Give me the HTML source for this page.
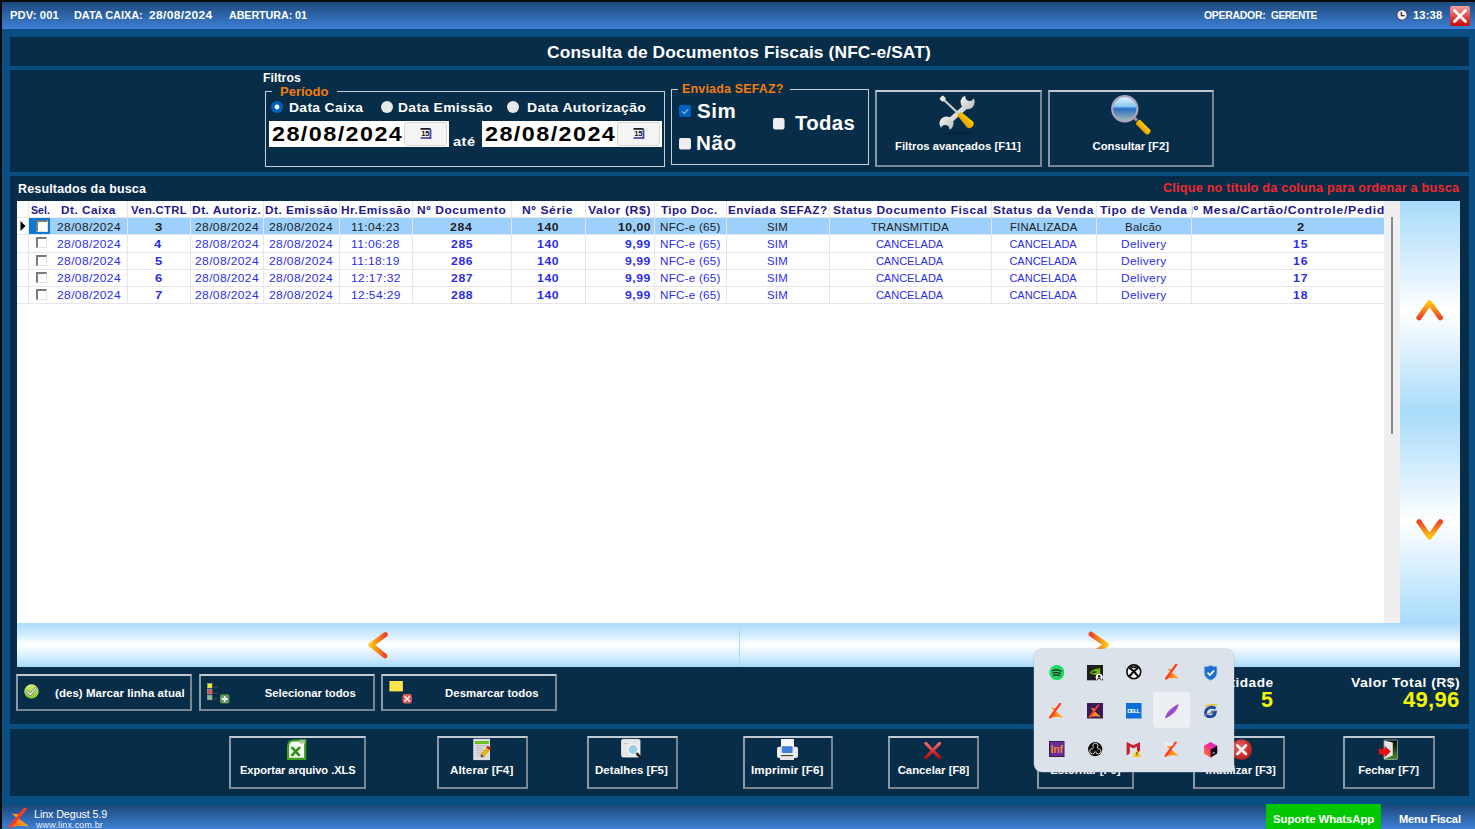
<!DOCTYPE html>
<html><head><meta charset="utf-8"><title>Consulta de Documentos Fiscais</title>
<style>
*{margin:0;padding:0;box-sizing:border-box}
html,body{width:1475px;height:829px;overflow:hidden;background:#0c0b09;font-family:"Liberation Sans",sans-serif}
#root{position:absolute;left:0;top:0;width:1475px;height:829px}
.a{position:absolute}
.t{position:absolute;white-space:pre;font-family:"Liberation Sans",sans-serif}
.band{position:absolute;left:2px;top:2px;width:1473px;height:827px;background:#0a4f84}
.bar{position:absolute;left:2px;width:1473px;background:linear-gradient(#1c497b,#3e80d6)}
.pnl{position:absolute;left:10px;width:1459px;background:#082d48}
.gb{position:absolute;border:1px solid #c9cfd6}
.btn{position:absolute;border:2px solid;border-color:#c2cad2 #7c8690 #7c8690 #8c9aa8}
.grid{position:absolute;left:17px;top:201px;width:1367px;height:422px;background:#fff;overflow:hidden}
.hs{position:absolute;left:17px;top:623px;width:1443px;height:44px;background:linear-gradient(#a8dbfa 0%,#def1fe 34%,#ffffff 48%,#f6fbff 56%,#d6eefd 76%,#a8dbfa 100%)}
.vs{position:absolute;left:1400px;width:60px;height:211px;background:linear-gradient(#a8dbfa 0%,#e2f3fe 36%,#ffffff 52%,#e2f3fe 68%,#a8dbfa 100%)}
</style></head><body><div id="root">
<div class="band"></div>
<div class="bar" style="top:2px;height:27px"></div>
<div class="pnl" style="top:37px;height:29px"></div>
<div class="pnl" style="top:70px;height:102px"></div>
<div class="pnl" style="top:176px;height:548px"></div>
<div class="pnl" style="top:729px;height:67px"></div>
<div class="bar" style="top:805px;height:24px"></div>
<!-- filter group boxes -->
<div class="gb" style="left:265px;top:91px;width:400px;height:76px"></div>
<div class="a" style="left:272px;top:85px;width:65px;height:10px;background:#082d48"></div>
<div class="gb" style="left:671px;top:89px;width:198px;height:76px"></div>
<div class="a" style="left:678px;top:83px;width:112px;height:10px;background:#082d48"></div>
<!-- date boxes -->
<div class="a" style="left:269px;top:121px;width:180px;height:26px;background:#fff"></div>
<div class="a" style="left:404px;top:122px;width:43px;height:24px;background:#f4f4f4;border:1px solid #d6d6d6;border-radius:3px"></div>
<div class="a" style="left:482px;top:121px;width:180px;height:26px;background:#fff"></div>
<div class="a" style="left:617px;top:122px;width:43px;height:24px;background:#f4f4f4;border:1px solid #d6d6d6;border-radius:3px"></div>
<!-- filter buttons -->
<div class="btn" style="left:875px;top:90px;width:167px;height:77px"></div>
<div class="btn" style="left:1048px;top:90px;width:166px;height:77px"></div>
<!-- grid -->
<div class="grid"></div>
<div class="a" style="left:1384px;top:201px;width:16px;height:422px;background:#efefef"></div>
<div class="a" style="left:1391px;top:217px;width:2px;height:217px;background:#8a8a8a"></div>
<div class="vs" style="top:201px;height:211px"></div>
<div class="vs" style="top:412px;height:211px"></div>
<div class="hs"></div>
<div class="a" style="left:739px;top:625px;width:1px;height:40px;background:#a6dafa"></div>
<!-- result panel buttons -->
<div class="btn" style="left:16px;top:674px;width:176px;height:37px"></div>
<div class="btn" style="left:199px;top:674px;width:176px;height:37px"></div>
<div class="btn" style="left:381px;top:674px;width:176px;height:37px"></div>
<!-- action buttons -->
<div class="btn" style="left:229px;top:736px;width:137px;height:53px"></div>
<div class="btn" style="left:437px;top:736px;width:91px;height:53px"></div>
<div class="btn" style="left:587px;top:736px;width:91px;height:53px"></div>
<div class="btn" style="left:743px;top:736px;width:90px;height:53px"></div>
<div class="btn" style="left:888px;top:736px;width:91px;height:53px"></div>
<div class="btn" style="left:1037px;top:736px;width:97px;height:53px"></div>
<div class="btn" style="left:1193px;top:736px;width:92px;height:53px"></div>
<div class="btn" style="left:1343px;top:736px;width:92px;height:53px"></div>
<!-- status -->
<div class="a" style="left:1266px;top:804px;width:115px;height:25px;background:#00c800"></div>
<div class='a' style='left:50px;top:218px;width:1334px;height:16px;background:#9dd1fb'></div>
<div class='a' style='left:29px;top:218px;width:21px;height:16px;background:#0a78d7'></div>
<div class='a' style='left:28px;top:201px;width:1px;height:103px;background:#e6e6e6'></div>
<div class='a' style='left:127px;top:201px;width:1px;height:103px;background:#e6e6e6'></div>
<div class='a' style='left:190px;top:201px;width:1px;height:103px;background:#e6e6e6'></div>
<div class='a' style='left:263px;top:201px;width:1px;height:103px;background:#e6e6e6'></div>
<div class='a' style='left:339px;top:201px;width:1px;height:103px;background:#e6e6e6'></div>
<div class='a' style='left:412px;top:201px;width:1px;height:103px;background:#e6e6e6'></div>
<div class='a' style='left:511px;top:201px;width:1px;height:103px;background:#e6e6e6'></div>
<div class='a' style='left:585px;top:201px;width:1px;height:103px;background:#e6e6e6'></div>
<div class='a' style='left:654px;top:201px;width:1px;height:103px;background:#e6e6e6'></div>
<div class='a' style='left:726px;top:201px;width:1px;height:103px;background:#e6e6e6'></div>
<div class='a' style='left:829px;top:201px;width:1px;height:103px;background:#e6e6e6'></div>
<div class='a' style='left:991px;top:201px;width:1px;height:103px;background:#e6e6e6'></div>
<div class='a' style='left:1096px;top:201px;width:1px;height:103px;background:#e6e6e6'></div>
<div class='a' style='left:1191px;top:201px;width:1px;height:103px;background:#e6e6e6'></div>
<div class='a' style='left:17px;top:217px;width:1367px;height:1px;background:#e6e6e6'></div>
<div class='a' style='left:17px;top:234px;width:1367px;height:1px;background:#e6e6e6'></div>
<div class='a' style='left:17px;top:252px;width:1367px;height:1px;background:#e6e6e6'></div>
<div class='a' style='left:17px;top:269px;width:1367px;height:1px;background:#e6e6e6'></div>
<div class='a' style='left:17px;top:286px;width:1367px;height:1px;background:#e6e6e6'></div>
<div class='a' style='left:17px;top:303px;width:1367px;height:1px;background:#e6e6e6'></div>
<svg class='a' style='left:19px;top:220px' width='8' height='12'><path d='M1.5 1 L6.5 6 L1.5 11 Z' fill='#000'/></svg>
<div class='a' style='left:36px;top:220px;width:12px;height:12px;background:#fff;border-top:2px solid #777;border-left:2px solid #777;border-right:1px solid #ddd;border-bottom:1px solid #ddd'></div>
<div class='a' style='left:36px;top:237px;width:11px;height:11px;background:#fff;border-top:2px solid #7a7a7a;border-left:2px solid #7a7a7a;border-right:1px solid #e0e0e0;border-bottom:1px solid #e0e0e0'></div>
<div class='a' style='left:36px;top:255px;width:11px;height:11px;background:#fff;border-top:2px solid #7a7a7a;border-left:2px solid #7a7a7a;border-right:1px solid #e0e0e0;border-bottom:1px solid #e0e0e0'></div>
<div class='a' style='left:36px;top:272px;width:11px;height:11px;background:#fff;border-top:2px solid #7a7a7a;border-left:2px solid #7a7a7a;border-right:1px solid #e0e0e0;border-bottom:1px solid #e0e0e0'></div>
<div class='a' style='left:36px;top:289px;width:11px;height:11px;background:#fff;border-top:2px solid #7a7a7a;border-left:2px solid #7a7a7a;border-right:1px solid #e0e0e0;border-bottom:1px solid #e0e0e0'></div>
<svg width='0' height='0' style='position:absolute'><defs>
<linearGradient id='gArrow' x1='0' y1='0' x2='1' y2='0'><stop offset='0' stop-color='#ffc412'/><stop offset='1' stop-color='#ef4424'/></linearGradient>
<linearGradient id='gArrowV' x1='0' y1='0' x2='0' y2='1'><stop offset='0' stop-color='#ffc412'/><stop offset='1' stop-color='#ef4424'/></linearGradient>
<linearGradient id='gArrowVd' x1='0' y1='1' x2='0' y2='0'><stop offset='0' stop-color='#ffc412'/><stop offset='1' stop-color='#ef4424'/></linearGradient>
<linearGradient id='gArrowR' x1='1' y1='0' x2='0' y2='0'><stop offset='0' stop-color='#ffc412'/><stop offset='1' stop-color='#ef4424'/></linearGradient>
<linearGradient id='gLinx' x1='0' y1='0' x2='1' y2='0.3'><stop offset='0' stop-color='#ff2f1c'/><stop offset='0.5' stop-color='#ff5a14'/><stop offset='1' stop-color='#ffb818'/></linearGradient>
<linearGradient id='gRedBtn' x1='0' y1='0' x2='0' y2='1'><stop offset='0' stop-color='#f2a4a4'/><stop offset='0.45' stop-color='#e25454'/><stop offset='1' stop-color='#c80808'/></linearGradient>
<linearGradient id='gYel' x1='0' y1='0' x2='0' y2='1'><stop offset='0' stop-color='#f8d000'/><stop offset='1' stop-color='#e39a00'/></linearGradient>
<linearGradient id='gSteel' x1='0' y1='0' x2='1' y2='1'><stop offset='0' stop-color='#f4f4f4'/><stop offset='1' stop-color='#bdbdbd'/></linearGradient>
<linearGradient id='gLens' x1='0' y1='0' x2='0' y2='1'><stop offset='0' stop-color='#e4f6fc'/><stop offset='0.4' stop-color='#8cc8f0'/><stop offset='0.5' stop-color='#2a6cc6'/><stop offset='1' stop-color='#a8c0b0'/></linearGradient>
<linearGradient id='gGreen' x1='0' y1='0' x2='0' y2='1'><stop offset='0' stop-color='#d4f07c'/><stop offset='1' stop-color='#8cc02a'/></linearGradient>
<linearGradient id='gXred' x1='0' y1='0' x2='0' y2='1'><stop offset='0' stop-color='#f06a6a'/><stop offset='1' stop-color='#bb0c0c'/></linearGradient>
<radialGradient id='gSphere' cx='0.4' cy='0.35' r='0.7'><stop offset='0' stop-color='#e86060'/><stop offset='1' stop-color='#b01818'/></radialGradient>
<linearGradient id='gDoor' x1='0' y1='0' x2='0' y2='1'><stop offset='0' stop-color='#000'/><stop offset='1' stop-color='#4a8a2a'/></linearGradient>
<linearGradient id='gCube' x1='0' y1='1' x2='1' y2='0'><stop offset='0' stop-color='#ff8c00'/><stop offset='0.5' stop-color='#ff2d8a'/><stop offset='1' stop-color='#b82be0'/></linearGradient>
<path id='linx' d='M16.3,5.3 C15.1,7.5 13.6,9.8 12.4,11.6 C14.1,13.8 15.9,15.8 17.7,18.3 C13.6,17.1 9.6,17.7 5.3,19.7 C6.9,17.1 8.9,14.6 10.5,12.7 C9.7,11.5 8.9,10.7 8.1,9.5 C9.3,9.7 10.3,10 10.9,10.1 C12.3,8.3 13.7,6.4 15.2,4.8 Z'/>
<linearGradient id='gSkirt' x1='0' y1='0' x2='1' y2='0'><stop offset='0' stop-color='#ff5a18'/><stop offset='1' stop-color='#ffb61e'/></linearGradient>
<symbol id='lx' viewBox='0 0 20 20' preserveAspectRatio='none'>
<path d='M2.6,5.6 L10.6,6.6 L8.8,11 Z' fill='#ff9c1c'/>
<path d='M8.4,9.6 Q13,13.5 19.6,18.4 Q10,16.6 0.6,19.4 Z' fill='url(#gSkirt)'/>
<path d='M1.2,18.6 Q8,10.5 15.6,1' stroke='#ff3a1e' stroke-width='3' stroke-linecap='round' fill='none'/>
</symbol>
</defs></svg>
<svg class='a' style='left:1396px;top:9px;overflow:visible' width='12' height='12' viewBox='0 0 12 12'><circle cx='6' cy='6' r='5.2' fill='#ececf2' stroke='#3a3a6a' stroke-width='1'/><path d='M5.4 3 V6.6 H8.6' stroke='#333' stroke-width='1.3' fill='none'/></svg>
<svg class='a' style='left:1450px;top:6px;overflow:visible' width='20' height='20' viewBox='0 0 20 20'><rect x='0' y='0' width='20' height='20' rx='2' fill='url(#gRedBtn)'/><path d='M4.5 4.5 L15.5 15.5 M15.5 4.5 L4.5 15.5' stroke='#fff' stroke-width='2.8' stroke-linecap='round'/></svg>
<svg class='a' style='left:271px;top:101px;overflow:visible' width='12' height='12' viewBox='0 0 12 12'><circle cx='6' cy='6' r='6' fill='#0060c0'/><circle cx='6' cy='6' r='2.4' fill='#fff'/></svg>
<svg class='a' style='left:380.5px;top:101px;overflow:visible' width='12' height='12' viewBox='0 0 12 12'><circle cx='6' cy='6' r='6' fill='#e8e8e8'/></svg>
<svg class='a' style='left:507.4px;top:101px;overflow:visible' width='12' height='12' viewBox='0 0 12 12'><circle cx='6' cy='6' r='6' fill='#e8e8e8'/></svg>
<svg class='a' style='left:679px;top:105px;overflow:visible' width='12' height='12' viewBox='0 0 12 12'><rect width='12' height='12' rx='2' fill='#0060bf'/><path d='M3.2 6.6 L5.4 8.5 L9 4.6' stroke='#86b6e2' stroke-width='1.2' fill='none' stroke-linecap='round'/></svg>
<svg class='a' style='left:679px;top:138px;overflow:visible' width='12' height='11.5' viewBox='0 0 12 11.5'><rect width='12' height='11.5' rx='2' fill='#eeeeee'/></svg>
<svg class='a' style='left:772.5px;top:117.7px;overflow:visible' width='11.5' height='11.5' viewBox='0 0 11.5 11.5'><rect width='11.5' height='11.5' rx='2' fill='#eeeeee'/></svg>
<svg class='a' style='left:420px;top:127px;overflow:visible' width='13' height='13' viewBox='0 0 13 13'><rect x='0.5' y='1' width='10' height='1.8' fill='#222'/><rect x='9.6' y='2.2' width='1.8' height='9.6' fill='#4a48b0'/><rect x='0.6' y='10.2' width='10.4' height='1.6' fill='#3a38a0'/><text x='1.2' y='9.4' font-family='Liberation Sans' font-size='7.5' font-weight='bold' fill='#111'>15</text></svg>
<svg class='a' style='left:633px;top:127px;overflow:visible' width='13' height='13' viewBox='0 0 13 13'><rect x='0.5' y='1' width='10' height='1.8' fill='#222'/><rect x='9.6' y='2.2' width='1.8' height='9.6' fill='#4a48b0'/><rect x='0.6' y='10.2' width='10.4' height='1.6' fill='#3a38a0'/><text x='1.2' y='9.4' font-family='Liberation Sans' font-size='7.5' font-weight='bold' fill='#111'>15</text></svg>
<svg class='a' style='left:934px;top:92px;overflow:visible' width='50' height='45' viewBox='0 0 50 45'><ellipse cx='23' cy='41.5' rx='15' ry='1.6' fill='#04111c' opacity='0.3'/><g fill='url(#gSteel)'><path d='M31 12 L11 29.5 L14.5 33.5 L34.5 15.5 Z'/><circle cx='33.6' cy='10.2' r='7'/><circle cx='12.5' cy='31.5' r='7'/></g><circle cx='35.6' cy='4.6' r='4.3' fill='#082d48'/><circle cx='11.2' cy='37.2' r='4.3' fill='#082d48'/><path d='M9 7 L26 23' stroke='#cfcfcf' stroke-width='2.2'/><rect x='6.2' y='4.2' width='5' height='5' rx='1.3' fill='#e6e6e6' transform='rotate(45 8.7 6.7)'/><g transform='translate(25,21.5) rotate(45)'><path d='M0,-2.6 L15.5,-4.2 A4.3,4.3 0 0 1 15.5,4.2 L0,2.6 Z' fill='url(#gYel)'/></g></svg>
<svg class='a' style='left:1106px;top:92px;overflow:visible' width='50' height='48' viewBox='0 0 50 48'><g transform='translate(38,36) rotate(45)'><rect x='-9.5' y='-3.1' width='17' height='6.2' rx='2.2' fill='url(#gYel)'/></g><circle cx='18.8' cy='16.8' r='12.6' fill='url(#gLens)' stroke='#aaa6be' stroke-width='2.2'/><path d='M28.5 26 L31 28.5' stroke='#999' stroke-width='3'/></svg>
<svg class='a' style='left:1410px;top:290px;overflow:visible' width='40' height='40' viewBox='1410 290 40 40'><path d='M1419 317.7 L1429.5 302.8 L1440.4 317.7' stroke='url(#gArrowV)' stroke-width='5.2' fill='none' stroke-linecap='round' stroke-linejoin='round'/></svg>
<svg class='a' style='left:1410px;top:510px;overflow:visible' width='40' height='40' viewBox='1410 510 40 40'><path d='M1419 521.8 L1429.5 537 L1440.4 521.8' stroke='url(#gArrowVd)' stroke-width='5.2' fill='none' stroke-linecap='round' stroke-linejoin='round'/></svg>
<svg class='a' style='left:360px;top:625px;overflow:visible' width='35' height='40' viewBox='360 625 35 40'><path d='M385.3 634.6 L371.1 645 L384.9 655.9' stroke='url(#gArrow)' stroke-width='5' fill='none' stroke-linecap='round' stroke-linejoin='round'/></svg>
<svg class='a' style='left:1080px;top:625px;overflow:visible' width='35' height='40' viewBox='1080 625 35 40'><path d='M1091.1 634.2 L1106.3 644.7 L1091.1 655.5' stroke='url(#gArrowR)' stroke-width='5' fill='none' stroke-linecap='round' stroke-linejoin='round'/></svg>
<svg class='a' style='left:24px;top:684px;overflow:visible' width='15' height='15' viewBox='0 0 15 15'><circle cx='7.5' cy='7.5' r='7.2' fill='url(#gGreen)'/><path d='M3.8 7.6 L6.3 10.6 L11.4 4.6' stroke='#6a7a5a' stroke-width='2.6' fill='none' stroke-linejoin='round' stroke-linecap='round'/><path d='M3.8 7.6 L6.3 10.6 L11.4 4.6' stroke='#f2f4ee' stroke-width='1.4' fill='none' stroke-linejoin='round' stroke-linecap='round'/></svg>
<svg class='a' style='left:200px;top:676px;overflow:visible' width='32' height='30' viewBox='0 0 32 30'><rect x='7.5' y='7.5' width='4.5' height='4.5' fill='#f4f010' stroke='#aaa' stroke-width='0.6'/><rect x='7.5' y='13.5' width='4.5' height='4.5' fill='#e05050' stroke='#aaa' stroke-width='0.6'/><rect x='7.5' y='19.3' width='4.5' height='4.5' fill='#80c080' stroke='#aaa' stroke-width='0.6'/><path d='M13 11.3 H18 M13 17 H18 M13 22.7 H18' stroke='#4a4a40' stroke-width='0.9'/><rect x='20' y='18.2' width='9.4' height='9.4' rx='2' fill='#5a9a4e'/><path d='M24.7 20 V26 M21.7 23 H27.7' stroke='#f0f0f0' stroke-width='1.8'/></svg>
<svg class='a' style='left:384px;top:676px;overflow:visible' width='32' height='30' viewBox='0 0 32 30'><rect x='5.4' y='5' width='13.5' height='10.4' fill='#fce44a'/><rect x='18.5' y='18.1' width='9.3' height='9.5' rx='2' fill='#d85a5a'/><path d='M20.5 20.2 L25.8 25.5 M25.8 20.2 L20.5 25.5' stroke='#f6f0f0' stroke-width='1.5'/></svg>
<svg class='a' style='left:282px;top:736px;overflow:visible' width='30' height='28' viewBox='0 0 30 28'><path d='M12 4.5 H23.2 V22.8 H6 V10.5 Q6 4.5 12 4.5 Z' fill='#f4fbf0' stroke='#3a9e1e' stroke-width='2.2'/><path d='M9.6 11.2 L17.6 19.8 M18 11.2 L9.4 19.8' stroke='#2e8e16' stroke-width='2.6'/><rect x='17.5' y='3.5' width='6' height='4' fill='#9acb88' opacity='0.8'/></svg>
<svg class='a' style='left:466px;top:736px;overflow:visible' width='30' height='28' viewBox='0 0 30 28'><rect x='7.8' y='3.2' width='15.8' height='20.5' fill='#dcdcdc' stroke='#f4f4f4' stroke-width='0.8'/><rect x='8.8' y='5' width='14' height='3' fill='#6cc022'/><path d='M10 9.8 H20 M10 12.2 H17 M10 14.6 H20 M10 17 H16 M10 19.4 H15' stroke='#b0b4b8' stroke-width='0.8'/><g transform='translate(21.5,13.5) rotate(40)'><rect x='-2.3' y='-1' width='4.6' height='8.5' fill='#e8b020'/><rect x='-2.3' y='-3.2' width='4.6' height='2.4' fill='#b02828'/><path d='M-2.3 7.5 L0 10.5 L2.3 7.5 Z' fill='#554'/></g></svg>
<svg class='a' style='left:616px;top:736px;overflow:visible' width='30' height='28' viewBox='0 0 30 28'><rect x='5.6' y='3.4' width='18.4' height='17.6' rx='1.5' fill='#e6e6e6' stroke='#fafafa' stroke-width='0.8'/><path d='M8 7.5 H12' stroke='#bbb' stroke-width='0.8'/><circle cx='16.9' cy='13.5' r='5.2' fill='#9ccbe6' stroke='#f4f4f4' stroke-width='1.6'/><path d='M21.2 18 L25 21.8' stroke='#222' stroke-width='2.6' stroke-linecap='round'/></svg>
<svg class='a' style='left:772px;top:736px;overflow:visible' width='30' height='28' viewBox='0 0 30 28'><rect x='9' y='3' width='13' height='9' fill='#f6f6f6'/><rect x='5' y='10.8' width='21' height='11.2' rx='2' fill='#ececec'/><rect x='9.8' y='10.2' width='10.8' height='6.8' rx='1' fill='#3d7ed8'/><rect x='9' y='19' width='12' height='1.2' fill='#444'/><rect x='8' y='20.8' width='14' height='3.2' fill='#e4e4e4'/></svg>
<svg class='a' style='left:918px;top:736px;overflow:visible' width='30' height='28' viewBox='0 0 30 28'><path d='M7.8 7.4 L21.6 21.6 M21.6 7.4 L7.8 21.6' stroke='url(#gXred)' stroke-width='3' stroke-linecap='round'/></svg>
<svg class='a' style='left:1230px;top:736px;overflow:visible' width='24' height='28' viewBox='0 0 24 28'><circle cx='11.6' cy='13.7' r='10.4' fill='url(#gSphere)'/><path d='M7.3 9.4 L15.9 18 M15.9 9.4 L7.3 18' stroke='#f8f0f0' stroke-width='2.8' stroke-linecap='round'/></svg>
<svg class='a' style='left:1373px;top:736px;overflow:visible' width='30' height='28' viewBox='0 0 30 28'><rect x='11' y='4' width='13.5' height='19.5' rx='1' fill='url(#gDoor)' stroke='#9aa' stroke-width='0.8'/><path d='M11.2 4.5 L19.8 6.5 V19.5 L11.2 23 Z' fill='#e6e6e4'/><path d='M5.8 12.8 H11.6 V9.8 L17.8 15.6 L11.6 21.6 V18.4 H5.8 Z' fill='#e41010'/></svg>
<svg class='a' style='left:9px;top:807.5px;overflow:visible' width='20.5' height='20' viewBox='0 0 20.5 20'><use href='#lx' x='0' y='0' width='20.5' height='20'/></svg>
<div class='t' style='left:10.0px;top:10.2px;font-size:11px;line-height:11px;font-weight:bold;color:#fff;letter-spacing:0.09px;transform:scaleX(1.021);transform-origin:0 0;'>PDV: 001</div>
<div class='t' style='left:74.3px;top:10.2px;font-size:11px;line-height:11px;font-weight:bold;color:#fff;letter-spacing:-0.03px;transform:scaleX(0.994);transform-origin:0 0;'>DATA CAIXA:</div>
<div class='t' style='left:148.6px;top:10.2px;font-size:11px;line-height:11px;font-weight:bold;color:#fff;letter-spacing:0.34px;transform:scaleX(1.089);transform-origin:0 0;'>28/08/2024</div>
<div class='t' style='left:228.9px;top:10.2px;font-size:11px;line-height:11px;font-weight:bold;color:#fff;letter-spacing:-0.10px;transform:scaleX(0.979);transform-origin:0 0;'>ABERTURA: 01</div>
<div class='t' style='left:1204.0px;top:10.0px;font-size:11px;line-height:11px;font-weight:bold;color:#fff;letter-spacing:-0.29px;transform:scaleX(0.950);transform-origin:0 0;'>OPERADOR:</div>
<div class='t' style='left:1271.4px;top:10.0px;font-size:11px;line-height:11px;font-weight:bold;color:#fff;letter-spacing:-0.49px;transform:scaleX(0.922);transform-origin:0 0;'>GERENTE</div>
<div class='t' style='left:1413.0px;top:10.2px;font-size:11px;line-height:11px;font-weight:bold;color:#fff;letter-spacing:0.10px;transform:scaleX(1.021);transform-origin:0 0;'>13:38</div>
<div class='t' style='left:546.8px;top:43.7px;font-size:17px;line-height:17px;font-weight:bold;color:#fff;letter-spacing:0.12px;transform:scaleX(1.021);transform-origin:0 0;'>Consulta de Documentos Fiscais (NFC-e/SAT)</div>
<div class='t' style='left:263.0px;top:72.3px;font-size:12px;line-height:12px;font-weight:bold;color:#fff;letter-spacing:0.07px;transform:scaleX(1.016);transform-origin:0 0;'>Filtros</div>
<div class='t' style='left:280.0px;top:85.0px;font-size:13px;line-height:13px;font-weight:bold;color:#f27c0c;letter-spacing:0.01px;'>Período</div>
<div class='t' style='left:288.8px;top:101.4px;font-size:13px;line-height:13px;font-weight:bold;color:#fff;letter-spacing:0.31px;transform:scaleX(1.067);transform-origin:0 0;'>Data Caixa</div>
<div class='t' style='left:398.0px;top:101.4px;font-size:13px;line-height:13px;font-weight:bold;color:#fff;letter-spacing:0.32px;transform:scaleX(1.065);transform-origin:0 0;'>Data Emissão</div>
<div class='t' style='left:526.6px;top:101.4px;font-size:13px;line-height:13px;font-weight:bold;color:#fff;letter-spacing:0.33px;transform:scaleX(1.074);transform-origin:0 0;'>Data Autorização</div>
<div class='t' style='left:272.0px;top:124.5px;font-size:19.5px;line-height:19.5px;font-weight:bold;color:#000;letter-spacing:1.20px;transform:scaleX(1.198);transform-origin:0 0;'>28/08/2024</div>
<div class='t' style='left:484.9px;top:124.5px;font-size:19.5px;line-height:19.5px;font-weight:bold;color:#000;letter-spacing:1.20px;transform:scaleX(1.198);transform-origin:0 0;'>28/08/2024</div>
<div class='t' style='left:453.4px;top:135.1px;font-size:13.5px;line-height:13.5px;font-weight:bold;color:#fff;letter-spacing:0.48px;transform:scaleX(1.078);transform-origin:0 0;'>até</div>
<div class='t' style='left:682.0px;top:82.5px;font-size:12px;line-height:12px;font-weight:bold;color:#f27c0c;letter-spacing:0.18px;transform:scaleX(1.038);transform-origin:0 0;'>Enviada SEFAZ?</div>
<div class='t' style='left:696.6px;top:101.6px;font-size:19.5px;line-height:19.5px;font-weight:bold;color:#fff;letter-spacing:0.57px;transform:scaleX(1.050);transform-origin:0 0;'>Sim</div>
<div class='t' style='left:695.9px;top:134.3px;font-size:19.5px;line-height:19.5px;font-weight:bold;color:#fff;letter-spacing:0.62px;transform:scaleX(1.055);transform-origin:0 0;'>Não</div>
<div class='t' style='left:794.6px;top:114.4px;font-size:19.5px;line-height:19.5px;font-weight:bold;color:#fff;letter-spacing:0.37px;transform:scaleX(1.041);transform-origin:0 0;'>Todas</div>
<div class='t' style='left:895.0px;top:141.4px;font-size:11.3px;line-height:11.3px;font-weight:bold;color:#fff;letter-spacing:0.01px;'>Filtros avançados [F11]</div>
<div class='t' style='left:1092.5px;top:141.4px;font-size:11.3px;line-height:11.3px;font-weight:bold;color:#fff;letter-spacing:0.00px;'>Consultar [F2]</div>
<div class='t' style='left:17.6px;top:183.2px;font-size:12px;line-height:12px;font-weight:bold;color:#fff;letter-spacing:0.17px;transform:scaleX(1.039);transform-origin:0 0;'>Resultados da busca</div>
<div class='t' style='left:1162.6px;top:182.2px;font-size:12px;line-height:12px;font-weight:bold;color:#f0282d;letter-spacing:0.20px;transform:scaleX(1.055);transform-origin:0 0;'>Clique no título da coluna para ordenar a busca</div>
<div class='t' style='left:54.7px;top:688.1px;font-size:11.3px;line-height:11.3px;font-weight:bold;color:#fff;letter-spacing:0.06px;transform:scaleX(1.016);transform-origin:0 0;'>(des) Marcar linha atual</div>
<div class='t' style='left:264.7px;top:688.1px;font-size:11.3px;line-height:11.3px;font-weight:bold;color:#fff;letter-spacing:-0.00px;'>Selecionar todos</div>
<div class='t' style='left:444.5px;top:688.1px;font-size:11.3px;line-height:11.3px;font-weight:bold;color:#fff;letter-spacing:0.04px;transform:scaleX(1.008);transform-origin:0 0;'>Desmarcar todos</div>
<div class='t' style='left:1193.9px;top:676.9px;font-size:12.5px;line-height:12.5px;font-weight:bold;color:#fff;letter-spacing:0.42px;transform:scaleX(1.089);transform-origin:0 0;'>Quantidade</div>
<div class='t' style='left:1260.9px;top:689.9px;font-size:21.5px;line-height:21.5px;font-weight:bold;color:#f5f500;letter-spacing:0.00px;'>5</div>
<div class='t' style='left:1350.5px;top:676.9px;font-size:12.5px;line-height:12.5px;font-weight:bold;color:#fff;letter-spacing:0.43px;transform:scaleX(1.119);transform-origin:0 0;'>Valor Total (R$)</div>
<div class='t' style='left:1403.0px;top:689.9px;font-size:21.5px;line-height:21.5px;font-weight:bold;color:#f5f500;letter-spacing:0.24px;transform:scaleX(1.027);transform-origin:0 0;'>49,96</div>
<div class='t' style='left:239.5px;top:765.3px;font-size:11.3px;line-height:11.3px;font-weight:bold;color:#fff;letter-spacing:-0.06px;transform:scaleX(0.985);transform-origin:0 0;'>Exportar arquivo .XLS</div>
<div class='t' style='left:450.4px;top:765.3px;font-size:11.3px;line-height:11.3px;font-weight:bold;color:#fff;letter-spacing:0.11px;transform:scaleX(1.030);transform-origin:0 0;'>Alterar [F4]</div>
<div class='t' style='left:595.3px;top:765.3px;font-size:11.3px;line-height:11.3px;font-weight:bold;color:#fff;letter-spacing:0.06px;transform:scaleX(1.016);transform-origin:0 0;'>Detalhes [F5]</div>
<div class='t' style='left:751.0px;top:765.3px;font-size:11.3px;line-height:11.3px;font-weight:bold;color:#fff;letter-spacing:0.11px;transform:scaleX(1.030);transform-origin:0 0;'>Imprimir [F6]</div>
<div class='t' style='left:897.7px;top:765.3px;font-size:11.3px;line-height:11.3px;font-weight:bold;color:#fff;letter-spacing:0.01px;'>Cancelar [F8]</div>
<div class='t' style='left:1050.2px;top:765.3px;font-size:11.3px;line-height:11.3px;font-weight:bold;color:#fff;letter-spacing:0.00px;'>Estornar [F9]</div>
<div class='t' style='left:1205.6px;top:765.3px;font-size:11.3px;line-height:11.3px;font-weight:bold;color:#fff;letter-spacing:0.00px;'>Inutilizar [F3]</div>
<div class='t' style='left:1358.2px;top:765.3px;font-size:11.3px;line-height:11.3px;font-weight:bold;color:#fff;letter-spacing:-0.01px;'>Fechar [F7]</div>
<div class='t' style='left:34.2px;top:808.5px;font-size:11px;line-height:11px;font-weight:normal;color:#fff;letter-spacing:-0.09px;transform:scaleX(0.975);transform-origin:0 0;'>Linx Degust 5.9</div>
<div class='t' style='left:36.1px;top:820.5px;font-size:8.5px;line-height:8.5px;font-weight:normal;color:#e8eef8;letter-spacing:0.15px;transform:scaleX(1.052);transform-origin:0 0;'>www.linx.com.br</div>
<div class='t' style='left:1272.6px;top:813.9px;font-size:11.5px;line-height:11.5px;font-weight:bold;color:#fff;letter-spacing:-0.06px;transform:scaleX(0.987);transform-origin:0 0;'>Suporte WhatsApp</div>
<div class='t' style='left:1398.7px;top:813.9px;font-size:11.5px;line-height:11.5px;font-weight:bold;color:#fff;letter-spacing:-0.16px;transform:scaleX(0.965);transform-origin:0 0;'>Menu Fiscal</div>
<div class='t' style='left:30.9px;top:204.6px;font-size:10.5px;line-height:10.5px;font-weight:bold;color:#1f1a86;letter-spacing:0.04px;transform:scaleX(1.011);transform-origin:0 0;'>Sel.</div>
<div class='t' style='left:61.0px;top:204.6px;font-size:10.5px;line-height:10.5px;font-weight:bold;color:#1f1a86;letter-spacing:0.42px;transform:scaleX(1.125);transform-origin:0 0;'>Dt. Caixa</div>
<div class='t' style='left:130.9px;top:204.6px;font-size:10.5px;line-height:10.5px;font-weight:bold;color:#1f1a86;letter-spacing:0.33px;transform:scaleX(1.074);transform-origin:0 0;'>Ven.CTRL</div>
<div class='t' style='left:191.7px;top:204.6px;font-size:10.5px;line-height:10.5px;font-weight:bold;color:#1f1a86;letter-spacing:0.42px;transform:scaleX(1.142);transform-origin:0 0;'>Dt. Autoriz.</div>
<div class='t' style='left:265.1px;top:204.6px;font-size:10.5px;line-height:10.5px;font-weight:bold;color:#1f1a86;letter-spacing:0.44px;transform:scaleX(1.124);transform-origin:0 0;'>Dt. Emissão</div>
<div class='t' style='left:341.2px;top:204.6px;font-size:10.5px;line-height:10.5px;font-weight:bold;color:#1f1a86;letter-spacing:0.48px;transform:scaleX(1.128);transform-origin:0 0;'>Hr.Emissão</div>
<div class='t' style='left:417.2px;top:204.6px;font-size:10.5px;line-height:10.5px;font-weight:bold;color:#1f1a86;letter-spacing:0.53px;transform:scaleX(1.140);transform-origin:0 0;'>Nº Documento</div>
<div class='t' style='left:522.0px;top:204.6px;font-size:10.5px;line-height:10.5px;font-weight:bold;color:#1f1a86;letter-spacing:0.52px;transform:scaleX(1.157);transform-origin:0 0;'>Nº Série</div>
<div class='t' style='left:588.4px;top:204.6px;font-size:10.5px;line-height:10.5px;font-weight:bold;color:#1f1a86;letter-spacing:0.51px;transform:scaleX(1.167);transform-origin:0 0;'>Valor (R$)</div>
<div class='t' style='left:661.4px;top:204.6px;font-size:10.5px;line-height:10.5px;font-weight:bold;color:#1f1a86;letter-spacing:0.39px;transform:scaleX(1.108);transform-origin:0 0;'>Tipo Doc.</div>
<div class='t' style='left:728.0px;top:204.6px;font-size:10.5px;line-height:10.5px;font-weight:bold;color:#1f1a86;letter-spacing:0.43px;transform:scaleX(1.113);transform-origin:0 0;'>Enviada SEFAZ?</div>
<div class='t' style='left:832.7px;top:204.6px;font-size:10.5px;line-height:10.5px;font-weight:bold;color:#1f1a86;letter-spacing:0.46px;transform:scaleX(1.137);transform-origin:0 0;'>Status Documento Fiscal</div>
<div class='t' style='left:992.8px;top:204.6px;font-size:10.5px;line-height:10.5px;font-weight:bold;color:#1f1a86;letter-spacing:0.48px;transform:scaleX(1.142);transform-origin:0 0;'>Status da Venda</div>
<div class='t' style='left:1100.2px;top:204.6px;font-size:10.5px;line-height:10.5px;font-weight:bold;color:#1f1a86;letter-spacing:0.47px;transform:scaleX(1.135);transform-origin:0 0;'>Tipo de Venda</div>
<div class='a' style='left:1192px;top:201px;width:192px;height:16px;overflow:hidden'><div class='t' style='left:-7.8px;top:3.6px;font-size:10.5px;line-height:10.5px;font-weight:bold;color:#1f1a86;letter-spacing:0.56px;transform:scaleX(1.178);transform-origin:0 0;'>Nº Mesa/Cartão/Controle/Pedido</div></div>
<div class='t' style='left:56.8px;top:221.6px;font-size:11px;line-height:11px;font-weight:normal;color:#1c1c1c;letter-spacing:0.35px;transform:scaleX(1.093);transform-origin:0 0;'>28/08/2024</div>
<div class='t' style='left:155.0px;top:221.6px;font-size:11px;line-height:11px;font-weight:bold;color:#1c1c1c;letter-spacing:0.00px;transform:scaleX(1.180);transform-origin:0 0;'>3</div>
<div class='t' style='left:194.8px;top:221.6px;font-size:11px;line-height:11px;font-weight:normal;color:#1c1c1c;letter-spacing:0.35px;transform:scaleX(1.093);transform-origin:0 0;'>28/08/2024</div>
<div class='t' style='left:269.3px;top:221.6px;font-size:11px;line-height:11px;font-weight:normal;color:#1c1c1c;letter-spacing:0.35px;transform:scaleX(1.093);transform-origin:0 0;'>28/08/2024</div>
<div class='t' style='left:351.3px;top:221.6px;font-size:11px;line-height:11px;font-weight:normal;color:#1c1c1c;letter-spacing:0.34px;transform:scaleX(1.093);transform-origin:0 0;'>11:04:23</div>
<div class='t' style='left:450.2px;top:221.6px;font-size:11px;line-height:11px;font-weight:bold;color:#1c1c1c;letter-spacing:0.62px;transform:scaleX(1.108);transform-origin:0 0;'>284</div>
<div class='t' style='left:537.2px;top:221.6px;font-size:11px;line-height:11px;font-weight:bold;color:#1c1c1c;letter-spacing:0.59px;transform:scaleX(1.108);transform-origin:0 0;'>140</div>
<div class='t' style='left:618.1px;top:221.6px;font-size:11px;line-height:11px;font-weight:bold;color:#1c1c1c;letter-spacing:0.45px;transform:scaleX(1.108);transform-origin:0 0;'>10,00</div>
<div class='t' style='left:660.0px;top:221.6px;font-size:11px;line-height:11px;font-weight:normal;color:#1c1c1c;letter-spacing:0.22px;transform:scaleX(1.058);transform-origin:0 0;'>NFC-e (65)</div>
<div class='t' style='left:767.2px;top:221.6px;font-size:11px;line-height:11px;font-weight:normal;color:#1c1c1c;letter-spacing:0.21px;transform:scaleX(1.034);transform-origin:0 0;'>SIM</div>
<div class='t' style='left:870.9px;top:221.6px;font-size:11px;line-height:11px;font-weight:normal;color:#1c1c1c;letter-spacing:0.12px;transform:scaleX(1.025);transform-origin:0 0;'>TRANSMITIDA</div>
<div class='t' style='left:1009.5px;top:221.6px;font-size:11px;line-height:11px;font-weight:normal;color:#1c1c1c;letter-spacing:0.16px;transform:scaleX(1.035);transform-origin:0 0;'>FINALIZADA</div>
<div class='t' style='left:1125.3px;top:221.6px;font-size:11px;line-height:11px;font-weight:normal;color:#1c1c1c;letter-spacing:0.22px;transform:scaleX(1.052);transform-origin:0 0;'>Balcão</div>
<div class='t' style='left:1297.0px;top:221.6px;font-size:11px;line-height:11px;font-weight:bold;color:#1c1c1c;letter-spacing:0.00px;transform:scaleX(1.180);transform-origin:0 0;'>2</div>
<div class='t' style='left:56.8px;top:238.9px;font-size:11px;line-height:11px;font-weight:normal;color:#2c2ce8;letter-spacing:0.35px;transform:scaleX(1.093);transform-origin:0 0;'>28/08/2024</div>
<div class='t' style='left:154.4px;top:238.9px;font-size:11px;line-height:11px;font-weight:bold;color:#2c2ce8;letter-spacing:0.00px;transform:scaleX(1.180);transform-origin:0 0;'>4</div>
<div class='t' style='left:194.8px;top:238.9px;font-size:11px;line-height:11px;font-weight:normal;color:#2c2ce8;letter-spacing:0.35px;transform:scaleX(1.093);transform-origin:0 0;'>28/08/2024</div>
<div class='t' style='left:269.3px;top:238.9px;font-size:11px;line-height:11px;font-weight:normal;color:#2c2ce8;letter-spacing:0.35px;transform:scaleX(1.093);transform-origin:0 0;'>28/08/2024</div>
<div class='t' style='left:351.3px;top:238.9px;font-size:11px;line-height:11px;font-weight:normal;color:#2c2ce8;letter-spacing:0.34px;transform:scaleX(1.093);transform-origin:0 0;'>11:06:28</div>
<div class='t' style='left:450.7px;top:238.9px;font-size:11px;line-height:11px;font-weight:bold;color:#2c2ce8;letter-spacing:0.59px;transform:scaleX(1.108);transform-origin:0 0;'>285</div>
<div class='t' style='left:537.2px;top:238.9px;font-size:11px;line-height:11px;font-weight:bold;color:#2c2ce8;letter-spacing:0.59px;transform:scaleX(1.108);transform-origin:0 0;'>140</div>
<div class='t' style='left:625.3px;top:238.9px;font-size:11px;line-height:11px;font-weight:bold;color:#2c2ce8;letter-spacing:0.46px;transform:scaleX(1.108);transform-origin:0 0;'>9,99</div>
<div class='t' style='left:660.0px;top:238.9px;font-size:11px;line-height:11px;font-weight:normal;color:#2c2ce8;letter-spacing:0.22px;transform:scaleX(1.058);transform-origin:0 0;'>NFC-e (65)</div>
<div class='t' style='left:767.2px;top:238.9px;font-size:11px;line-height:11px;font-weight:normal;color:#2c2ce8;letter-spacing:0.21px;transform:scaleX(1.034);transform-origin:0 0;'>SIM</div>
<div class='t' style='left:875.9px;top:238.9px;font-size:11px;line-height:11px;font-weight:normal;color:#2c2ce8;letter-spacing:0.01px;'>CANCELADA</div>
<div class='t' style='left:1009.4px;top:238.9px;font-size:11px;line-height:11px;font-weight:normal;color:#2c2ce8;letter-spacing:0.01px;'>CANCELADA</div>
<div class='t' style='left:1120.6px;top:238.9px;font-size:11px;line-height:11px;font-weight:normal;color:#2c2ce8;letter-spacing:0.29px;transform:scaleX(1.083);transform-origin:0 0;'>Delivery</div>
<div class='t' style='left:1293.4px;top:238.9px;font-size:11px;line-height:11px;font-weight:bold;color:#2c2ce8;letter-spacing:0.79px;transform:scaleX(1.108);transform-origin:0 0;'>15</div>
<div class='t' style='left:56.8px;top:255.9px;font-size:11px;line-height:11px;font-weight:normal;color:#2c2ce8;letter-spacing:0.35px;transform:scaleX(1.093);transform-origin:0 0;'>28/08/2024</div>
<div class='t' style='left:155.0px;top:255.9px;font-size:11px;line-height:11px;font-weight:bold;color:#2c2ce8;letter-spacing:0.00px;transform:scaleX(1.180);transform-origin:0 0;'>5</div>
<div class='t' style='left:194.8px;top:255.9px;font-size:11px;line-height:11px;font-weight:normal;color:#2c2ce8;letter-spacing:0.35px;transform:scaleX(1.093);transform-origin:0 0;'>28/08/2024</div>
<div class='t' style='left:269.3px;top:255.9px;font-size:11px;line-height:11px;font-weight:normal;color:#2c2ce8;letter-spacing:0.35px;transform:scaleX(1.093);transform-origin:0 0;'>28/08/2024</div>
<div class='t' style='left:351.3px;top:255.9px;font-size:11px;line-height:11px;font-weight:normal;color:#2c2ce8;letter-spacing:0.34px;transform:scaleX(1.093);transform-origin:0 0;'>11:18:19</div>
<div class='t' style='left:450.7px;top:255.9px;font-size:11px;line-height:11px;font-weight:bold;color:#2c2ce8;letter-spacing:0.59px;transform:scaleX(1.108);transform-origin:0 0;'>286</div>
<div class='t' style='left:537.2px;top:255.9px;font-size:11px;line-height:11px;font-weight:bold;color:#2c2ce8;letter-spacing:0.59px;transform:scaleX(1.108);transform-origin:0 0;'>140</div>
<div class='t' style='left:625.3px;top:255.9px;font-size:11px;line-height:11px;font-weight:bold;color:#2c2ce8;letter-spacing:0.46px;transform:scaleX(1.108);transform-origin:0 0;'>9,99</div>
<div class='t' style='left:660.0px;top:255.9px;font-size:11px;line-height:11px;font-weight:normal;color:#2c2ce8;letter-spacing:0.22px;transform:scaleX(1.058);transform-origin:0 0;'>NFC-e (65)</div>
<div class='t' style='left:767.2px;top:255.9px;font-size:11px;line-height:11px;font-weight:normal;color:#2c2ce8;letter-spacing:0.21px;transform:scaleX(1.034);transform-origin:0 0;'>SIM</div>
<div class='t' style='left:875.9px;top:255.9px;font-size:11px;line-height:11px;font-weight:normal;color:#2c2ce8;letter-spacing:0.01px;'>CANCELADA</div>
<div class='t' style='left:1009.4px;top:255.9px;font-size:11px;line-height:11px;font-weight:normal;color:#2c2ce8;letter-spacing:0.01px;'>CANCELADA</div>
<div class='t' style='left:1120.6px;top:255.9px;font-size:11px;line-height:11px;font-weight:normal;color:#2c2ce8;letter-spacing:0.29px;transform:scaleX(1.083);transform-origin:0 0;'>Delivery</div>
<div class='t' style='left:1293.4px;top:255.9px;font-size:11px;line-height:11px;font-weight:bold;color:#2c2ce8;letter-spacing:0.79px;transform:scaleX(1.108);transform-origin:0 0;'>16</div>
<div class='t' style='left:56.8px;top:272.9px;font-size:11px;line-height:11px;font-weight:normal;color:#2c2ce8;letter-spacing:0.35px;transform:scaleX(1.093);transform-origin:0 0;'>28/08/2024</div>
<div class='t' style='left:155.0px;top:272.9px;font-size:11px;line-height:11px;font-weight:bold;color:#2c2ce8;letter-spacing:0.00px;transform:scaleX(1.180);transform-origin:0 0;'>6</div>
<div class='t' style='left:194.8px;top:272.9px;font-size:11px;line-height:11px;font-weight:normal;color:#2c2ce8;letter-spacing:0.35px;transform:scaleX(1.093);transform-origin:0 0;'>28/08/2024</div>
<div class='t' style='left:269.3px;top:272.9px;font-size:11px;line-height:11px;font-weight:normal;color:#2c2ce8;letter-spacing:0.35px;transform:scaleX(1.093);transform-origin:0 0;'>28/08/2024</div>
<div class='t' style='left:350.8px;top:272.9px;font-size:11px;line-height:11px;font-weight:normal;color:#2c2ce8;letter-spacing:0.35px;transform:scaleX(1.093);transform-origin:0 0;'>12:17:32</div>
<div class='t' style='left:450.7px;top:272.9px;font-size:11px;line-height:11px;font-weight:bold;color:#2c2ce8;letter-spacing:0.59px;transform:scaleX(1.108);transform-origin:0 0;'>287</div>
<div class='t' style='left:537.2px;top:272.9px;font-size:11px;line-height:11px;font-weight:bold;color:#2c2ce8;letter-spacing:0.59px;transform:scaleX(1.108);transform-origin:0 0;'>140</div>
<div class='t' style='left:625.3px;top:272.9px;font-size:11px;line-height:11px;font-weight:bold;color:#2c2ce8;letter-spacing:0.46px;transform:scaleX(1.108);transform-origin:0 0;'>9,99</div>
<div class='t' style='left:660.0px;top:272.9px;font-size:11px;line-height:11px;font-weight:normal;color:#2c2ce8;letter-spacing:0.22px;transform:scaleX(1.058);transform-origin:0 0;'>NFC-e (65)</div>
<div class='t' style='left:767.2px;top:272.9px;font-size:11px;line-height:11px;font-weight:normal;color:#2c2ce8;letter-spacing:0.21px;transform:scaleX(1.034);transform-origin:0 0;'>SIM</div>
<div class='t' style='left:875.9px;top:272.9px;font-size:11px;line-height:11px;font-weight:normal;color:#2c2ce8;letter-spacing:0.01px;'>CANCELADA</div>
<div class='t' style='left:1009.4px;top:272.9px;font-size:11px;line-height:11px;font-weight:normal;color:#2c2ce8;letter-spacing:0.01px;'>CANCELADA</div>
<div class='t' style='left:1120.6px;top:272.9px;font-size:11px;line-height:11px;font-weight:normal;color:#2c2ce8;letter-spacing:0.29px;transform:scaleX(1.083);transform-origin:0 0;'>Delivery</div>
<div class='t' style='left:1293.4px;top:272.9px;font-size:11px;line-height:11px;font-weight:bold;color:#2c2ce8;letter-spacing:0.79px;transform:scaleX(1.108);transform-origin:0 0;'>17</div>
<div class='t' style='left:56.8px;top:290.1px;font-size:11px;line-height:11px;font-weight:normal;color:#2c2ce8;letter-spacing:0.35px;transform:scaleX(1.093);transform-origin:0 0;'>28/08/2024</div>
<div class='t' style='left:155.0px;top:290.1px;font-size:11px;line-height:11px;font-weight:bold;color:#2c2ce8;letter-spacing:0.00px;transform:scaleX(1.180);transform-origin:0 0;'>7</div>
<div class='t' style='left:194.8px;top:290.1px;font-size:11px;line-height:11px;font-weight:normal;color:#2c2ce8;letter-spacing:0.35px;transform:scaleX(1.093);transform-origin:0 0;'>28/08/2024</div>
<div class='t' style='left:269.3px;top:290.1px;font-size:11px;line-height:11px;font-weight:normal;color:#2c2ce8;letter-spacing:0.35px;transform:scaleX(1.093);transform-origin:0 0;'>28/08/2024</div>
<div class='t' style='left:350.8px;top:290.1px;font-size:11px;line-height:11px;font-weight:normal;color:#2c2ce8;letter-spacing:0.35px;transform:scaleX(1.093);transform-origin:0 0;'>12:54:29</div>
<div class='t' style='left:450.7px;top:290.1px;font-size:11px;line-height:11px;font-weight:bold;color:#2c2ce8;letter-spacing:0.59px;transform:scaleX(1.108);transform-origin:0 0;'>288</div>
<div class='t' style='left:537.2px;top:290.1px;font-size:11px;line-height:11px;font-weight:bold;color:#2c2ce8;letter-spacing:0.59px;transform:scaleX(1.108);transform-origin:0 0;'>140</div>
<div class='t' style='left:625.3px;top:290.1px;font-size:11px;line-height:11px;font-weight:bold;color:#2c2ce8;letter-spacing:0.46px;transform:scaleX(1.108);transform-origin:0 0;'>9,99</div>
<div class='t' style='left:660.0px;top:290.1px;font-size:11px;line-height:11px;font-weight:normal;color:#2c2ce8;letter-spacing:0.22px;transform:scaleX(1.058);transform-origin:0 0;'>NFC-e (65)</div>
<div class='t' style='left:767.2px;top:290.1px;font-size:11px;line-height:11px;font-weight:normal;color:#2c2ce8;letter-spacing:0.21px;transform:scaleX(1.034);transform-origin:0 0;'>SIM</div>
<div class='t' style='left:875.9px;top:290.1px;font-size:11px;line-height:11px;font-weight:normal;color:#2c2ce8;letter-spacing:0.01px;'>CANCELADA</div>
<div class='t' style='left:1009.4px;top:290.1px;font-size:11px;line-height:11px;font-weight:normal;color:#2c2ce8;letter-spacing:0.01px;'>CANCELADA</div>
<div class='t' style='left:1120.6px;top:290.1px;font-size:11px;line-height:11px;font-weight:normal;color:#2c2ce8;letter-spacing:0.29px;transform:scaleX(1.083);transform-origin:0 0;'>Delivery</div>
<div class='t' style='left:1293.4px;top:290.1px;font-size:11px;line-height:11px;font-weight:bold;color:#2c2ce8;letter-spacing:0.79px;transform:scaleX(1.108);transform-origin:0 0;'>18</div>
<div class='a' style='left:1034px;top:649px;width:200px;height:123px;background:#dce2e9;border-radius:8px 8px 4px 8px;box-shadow:0 0 0 0.5px rgba(160,170,180,.5)'></div>
<div class='a' style='left:1153px;top:692px;width:37px;height:36px;background:#eceff3;border-radius:4px'></div>
<svg class='a' style='left:1049px;top:664.5px;overflow:visible' width='16' height='16' viewBox='0 0 16 16'><circle cx='7.8' cy='7.6' r='7.5' fill='#1ed760'/><path d='M3.4 5.6 Q8 4 12.2 6.2 M3.9 8 Q8 6.8 11.4 8.6 M4.4 10.3 Q8 9.4 10.7 10.8' stroke='#1a1a1a' stroke-width='1.2' fill='none' stroke-linecap='round'/></svg>
<svg class='a' style='left:1087px;top:664.7px;overflow:visible' width='16' height='16' viewBox='0 0 16 16'><rect width='16' height='15.3' fill='#1e1e1e'/><path d='M2.5 8 Q6 3.5 13.2 3.2 V9.5 Q8 11 2.5 8 Z' fill='#76b900'/><path d='M4.5 7.6 Q7 5.6 10 6.8 Q7.6 9.2 4.5 7.6' fill='#1e1e1e'/><circle cx='12.2' cy='12.3' r='3.5' fill='#fff'/><circle cx='12.2' cy='11.4' r='1.3' fill='#1e1e1e'/><path d='M10.2 14.6 Q12.2 12.4 14.2 14.6' stroke='#1e1e1e' stroke-width='1.1' fill='none'/></svg>
<svg class='a' style='left:1125.7px;top:664.3px;overflow:visible' width='16' height='16' viewBox='0 0 16 16'><circle cx='7.8' cy='7.8' r='6.9' fill='#fff' stroke='#0d0d0d' stroke-width='1.6'/><path d='M3.2 3.6 Q7.8 6.5 12.4 12.6 M12.4 3.6 Q7.8 6.5 3.2 12.6' stroke='#0d0d0d' stroke-width='2.2' fill='none'/><path d='M4.2 2.2 Q7.8 4.6 11.4 2.2' stroke='#0d0d0d' stroke-width='1.8' fill='none'/></svg>
<svg class='a' style='left:1164.6px;top:664.4px;overflow:visible' width='14.4' height='15.8' viewBox='0 0 14.4 15.8'><use href='#lx' x='0' y='0' width='14.4' height='15.8'/></svg>
<svg class='a' style='left:1204px;top:664.7px;overflow:visible' width='14' height='16' viewBox='0 0 14 16'><path d='M6.6 0.4 Q10 1.8 13 1.4 V8 Q13 12.8 6.6 15.4 Q0.2 12.8 0.2 8 V1.4 Q3.2 1.8 6.6 0.4 Z' fill='#1f6fd0' stroke='#9cc4ee' stroke-width='0.8'/><path d='M3.5 7.6 L5.9 10 L10 5.6' stroke='#fff' stroke-width='1.7' fill='none'/></svg>
<svg class='a' style='left:1049.4px;top:702.6px;overflow:visible' width='14.4' height='15.8' viewBox='0 0 14.4 15.8'><use href='#lx' x='0' y='0' width='14.4' height='15.8'/></svg>
<svg class='a' style='left:1087px;top:703px;overflow:visible' width='16' height='15.5' viewBox='0 0 16 15.5'><rect width='16' height='15.5' fill='#3a1a5a'/><use href='#lx' x='2' y='1.4' width='12' height='13.4'/></svg>
<svg class='a' style='left:1125.7px;top:703px;overflow:visible' width='15.5' height='15.5' viewBox='0 0 15.5 15.5'><rect width='15.5' height='15.5' fill='#0a6fd8'/><text x='1.2' y='10.4' font-family='Liberation Sans' font-size='6.2' font-weight='bold' fill='#fff' textLength='13'>DELL</text></svg>
<svg class='a' style='left:1164px;top:702.5px;overflow:visible' width='16' height='16' viewBox='0 0 16 16'><path d='M1 15.6 Q2 9 8 5 Q12 2.5 14.8 0.6 Q14.5 5 11 9 Q7 13 1 15.6 Z' fill='#a05ad0'/><path d='M2 14.6 Q7 9 13 2.5' stroke='#6a2a9a' stroke-width='0.7' fill='none'/></svg>
<svg class='a' style='left:1202.7px;top:703px;overflow:visible' width='15' height='15' viewBox='0 0 15 15'><path d='M2 3.4 Q8 0.6 14.4 2.4' stroke='#e8c020' stroke-width='1.4' fill='none'/><path d='M12.6 5.4 Q9.6 3.6 6.6 4.6 Q2.2 6.2 2.6 10.4 Q3.2 14 8 13.6 Q11.6 13.2 12.4 9.2 H8' stroke='#1b4a9a' stroke-width='2.8' fill='none'/><path d='M1 12.4 Q6 11.6 11 8' stroke='#888' stroke-width='1.2' fill='none'/></svg>
<svg class='a' style='left:1048.8px;top:741px;overflow:visible' width='15.5' height='16' viewBox='0 0 15.5 16'><rect width='15.5' height='16' fill='#2a1a3a'/><rect x='0.8' y='0.8' width='13.9' height='14.4' fill='#6a2aa0'/><text x='1.4' y='12.2' font-family='Liberation Sans' font-size='10.5' font-weight='bold' fill='#f08a2a' textLength='12.6'>Inf</text></svg>
<svg class='a' style='left:1087.9px;top:741.9px;overflow:visible' width='14.5' height='14.5' viewBox='0 0 14.5 14.5'><circle cx='7.2' cy='7.2' r='7.1' fill='#0c0c0c'/><circle cx='7.4' cy='3.9' r='2.6' fill='none' stroke='#e0e0e0' stroke-width='0.9'/><circle cx='4.3' cy='9.2' r='2.6' fill='none' stroke='#e0e0e0' stroke-width='0.9'/><circle cx='10.3' cy='9.3' r='2.6' fill='none' stroke='#e0e0e0' stroke-width='0.9'/><circle cx='7.2' cy='7.2' r='2.2' fill='#0c0c0c'/></svg>
<svg class='a' style='left:1126px;top:741px;overflow:visible' width='16' height='16' viewBox='0 0 16 16'><path d='M0.6 1 L7.4 4.2 L14 1 V9.6 L11 13 V5.6 L7.4 7.4 L3.8 5.6 V12.6 L0.6 14.6 Z' fill='#c8202a'/><path d='M11 9 L15.4 15.8 H6.6 Z' fill='#f8c800'/><path d='M11 11 V13.6 M11 14.4 V15' stroke='#222' stroke-width='0.9'/></svg>
<svg class='a' style='left:1163.8px;top:741.2px;overflow:visible' width='15.5' height='16' viewBox='0 0 15.5 16'><use href='#lx' x='0.5' y='0.5' width='14.5' height='15.5'/><text x='0' y='5' font-family='Liberation Sans' font-size='5' fill='#fff'>One</text></svg>
<svg class='a' style='left:1203.6px;top:741.8px;overflow:visible' width='13.2' height='15.5' viewBox='0 0 13.2 15.5'><path d='M6.6 0 L13.2 3.8 V11.6 L6.6 15.5 L0 11.6 V3.8 Z' fill='url(#gCube)'/><path d='M6.6 7.6 L13.2 3.8 V11.6 L6.6 15.5 Z' fill='#120818'/><path d='M8.6 11.6 L10.8 10.6' stroke='#fff' stroke-width='0.9'/></svg>
</div></body></html>
